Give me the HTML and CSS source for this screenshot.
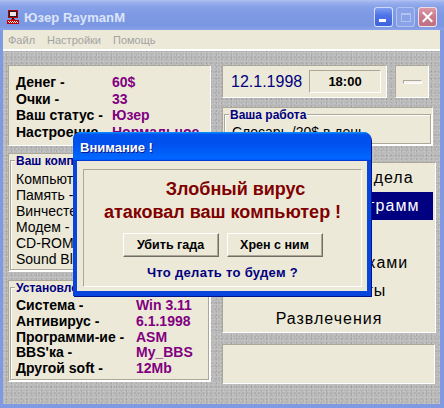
FILE: index.html
```html
<!DOCTYPE html>
<html lang="ru">
<head>
<meta charset="utf-8">
<title>Юзер RaymanM</title>
<link rel="stylesheet" href="styles.css">
</head>
<body>
<div class="window">
  <div class="titlebar">
    <svg class="app-icon" width="12" height="14" viewBox="0 0 12 14">
      <rect x="1" y="0" width="10" height="8" fill="#b80000"/>
      <rect x="2" y="1" width="8" height="6" fill="#202020"/>
      <rect x="3" y="2" width="6" height="4" fill="#e8e8e8"/>
      <rect x="5" y="8" width="2" height="1" fill="#400000"/>
      <rect x="4" y="9" width="4" height="1" fill="#b80000"/>
      <rect x="0" y="10" width="12" height="4" fill="#c00000"/>
      <rect x="1" y="11" width="1" height="1" fill="#fff"/>
      <rect x="3" y="11" width="1" height="1" fill="#fff"/>
      <rect x="5" y="11" width="1" height="1" fill="#fff"/>
      <rect x="7" y="11" width="1" height="1" fill="#fff"/>
      <rect x="9" y="11" width="1" height="1" fill="#fff"/>
      <rect x="2" y="12" width="1" height="1" fill="#fff"/>
      <rect x="4" y="12" width="1" height="1" fill="#fff"/>
      <rect x="6" y="12" width="1" height="1" fill="#fff"/>
      <rect x="8" y="12" width="1" height="1" fill="#fff"/>
      <rect x="10" y="12" width="1" height="1" fill="#fff"/>
    </svg>
    <span class="title">Юзер RaymanM</span>
    <div class="tb-buttons">
      <span class="tb-btn tb-min"><span class="min-bar"></span></span>
      <span class="tb-btn tb-max"><span class="max-box"></span></span>
      <span class="tb-btn tb-close">
        <svg width="17" height="18" viewBox="0 0 17 18"><path d="M4.5 5 L12.5 13 M12.5 5 L4.5 13" stroke="#fff" stroke-width="2" stroke-linecap="square"/></svg>
      </span>
    </div>
  </div>
  <div class="menubar">
    <span>Файл</span><span>Настройки</span><span>Помощь</span>
  </div>
  <div class="client">
    <div class="col-left">
      <div class="panel stats">
        <div class="kv"><span class="k">Денег -</span><span class="v">60$</span></div>
        <div class="kv"><span class="k">Очки -</span><span class="v">33</span></div>
        <div class="kv"><span class="k">Ваш статус -</span><span class="v">Юзер</span></div>
        <div class="kv"><span class="k">Настроение -</span><span class="v">Нормальное</span></div>
      </div>
      <div class="panel gpanel comp">
        <div class="group">
          <span class="glabel">Ваш компьютер</span>
          <div class="items">
            <div class="item">Компьютер - <span class="pv">486DX</span></div>
            <div class="item">Память - <span class="pv">8Mb</span></div>
            <div class="item">Винчестер - <span class="pv">540Mb</span></div>
            <div class="item">Модем - <span class="pv">14400</span></div>
            <div class="item">CD-ROM - <span class="pv">2x</span></div>
            <div class="item">Sound Blaster - <span class="pv">16</span></div>
          </div>
        </div>
      </div>
      <div class="panel gpanel soft">
        <div class="group">
          <span class="glabel">Установленное ПО</span>
          <div class="items soft-items">
            <div class="kv2"><span class="k2">Система -</span><span class="v2">Win 3.11</span></div>
            <div class="kv2"><span class="k2">Антивирус -</span><span class="v2">6.1.1998</span></div>
            <div class="kv2"><span class="k2">Программи-ие -</span><span class="v2">ASM</span></div>
            <div class="kv2"><span class="k2">BBS'ка -</span><span class="v2">My_BBS</span></div>
            <div class="kv2"><span class="k2">Другой soft -</span><span class="v2">12Mb</span></div>
          </div>
        </div>
      </div>
    </div>
    <div class="col-right">
      <div class="row-top">
        <div class="panel date-panel">
          <span class="date">12.1.1998</span>
          <span class="time-box">18:00</span>
        </div>
        <div class="panel small-panel"><span class="tiny-bar"></span></div>
      </div>
      <div class="panel gpanel work">
        <div class="group">
          <span class="glabel">Ваша работа</span>
          <div class="items work-items">
            <div class="item">Слесарь /20$ в день</div>
          </div>
        </div>
      </div>
      <div class="panel list">
        <div class="row">Всякие разные дела</div>
        <div class="row sel">Разработка программ</div>
        <div class="row">Своя сеть</div>
        <div class="row">Возня с железками</div>
        <div class="row">Мои контакты</div>
        <div class="row">Развлечения</div>
      </div>
      <div class="panel status"></div>
    </div>
  </div>

  <div class="dialog">
    <div class="dlg-title">Внимание !</div>
    <div class="dlg-body">
      <div class="dlg-frame">
        <div class="msg msg1">Злобный вирус</div>
        <div class="msg">атаковал ваш компьютер !</div>
        <div class="btns">
          <span class="btn">Убить гада</span>
          <span class="btn">Хрен с ним</span>
        </div>
        <div class="ask">Что делать то будем ?</div>
      </div>
    </div>
  </div>
</div>
</body>
</html>
```

FILE: styles.css
```css
* { box-sizing: border-box; }
html, body { margin: 0; padding: 0; }
body {
  width: 444px;
  height: 408px;
  overflow: hidden;
  background: #7f99e3;
  font-family: "Liberation Sans", Arial, sans-serif;
}

.window {
  position: relative;
  width: 444px;
  height: 408px;
  display: flex;
  flex-direction: column;
  background: #7f99e3;
}

/* ---------- title bar (inactive XP) ---------- */
.titlebar {
  height: 30px;
  flex: none;
  display: flex;
  align-items: center;
  padding: 4px 7px 0 7px;
  background: linear-gradient(180deg, #b2c4f2 0, #9cb2ee 2px, #87a1e8 7px, #7f9ae5 14px, #7c97e2 26px, #8aa2e6 30px);
}
.app-icon { flex: none; display: block; }
.title {
  margin-left: 5px;
  font-size: 13px;
  font-weight: bold;
  color: #dbe5f9;
  letter-spacing: 0.1px;
}
.tb-buttons {
  margin-left: auto;
  display: flex;
  gap: 3px;
}
.tb-btn {
  width: 19px;
  height: 20px;
  border-radius: 3px;
  border: 1px solid rgba(255, 255, 255, 0.75);
  display: flex;
}
.tb-min {
  background: linear-gradient(180deg, #7e9cf0 0, #4f74e6 40%, #3d63de 100%);
  align-items: flex-end;
  padding: 0 0 4px 4px;
}
.min-bar { width: 7px; height: 3px; background: #fff; }
.tb-max {
  background: #8aa3e8;
  border-color: rgba(255, 255, 255, 0.35);
  align-items: center;
  justify-content: center;
}
.max-box {
  width: 10px;
  height: 9px;
  border: 1px solid rgba(255, 255, 255, 0.35);
  border-top-width: 2px;
}
.tb-close {
  background: linear-gradient(180deg, #dc98a6 0, #c87a8c 50%, #bf6f82 100%);
  align-items: center;
  justify-content: center;
}
.tb-close svg { display: block; }

/* ---------- menu ---------- */
.menubar {
  height: 21px;
  flex: none;
  margin: 0 4px 0 3px;
  background: #ece9d8;
  border-bottom: 2px solid #fff;
  display: flex;
  align-items: center;
  gap: 12px;
  padding-left: 5px;
  font-size: 11px;
  color: #a3a3a3;
}

/* ---------- client ---------- */
.client {
  flex: 1;
  margin: 0 4px 4px 3px;
  display: flex;
  gap: 11px;
  padding: 14px 0 0 5px;
  background-color: #b9b9b9;
  background-image:
    radial-gradient(rgba(255, 255, 255, 0.22) 0.7px, transparent 1.1px),
    radial-gradient(rgba(0, 0, 0, 0.10) 0.7px, transparent 1.1px),
    radial-gradient(rgba(255, 255, 255, 0.14) 0.6px, transparent 1px),
    radial-gradient(rgba(0, 0, 0, 0.07) 0.6px, transparent 1px);
  background-size: 3px 3px, 5px 4px, 7px 5px, 4px 7px;
  background-position: 0 0, 1px 2px, 3px 1px, 2px 3px;
}

.panel {
  background: #ece9d8;
  border: 1px solid;
  border-color: #aca899 #fff #fff #aca899;
}

.col-left {
  width: 203px;
  flex: none;
  display: flex;
  flex-direction: column;
}
.col-right {
  width: 214px;
  flex: none;
  display: flex;
  flex-direction: column;
}

/* stats */
.stats {
  height: 81px;
  padding: 8px 0 0 7px;
  font-size: 14px;
  font-weight: bold;
  line-height: 16.7px;
}
.kv {
  display: grid;
  grid-template-columns: 96px auto;
  white-space: nowrap;
}
.k { color: #000; }
.v { color: #800080; }

/* group boxes */
.gpanel {
  display: flex;
  flex-direction: column;
  padding: 0 1px 1px 1px;
}
.group {
  flex: 1;
  margin-top: 6px;
  border: 1px solid #aca899;
  box-shadow: inset 1px 1px 0 #fff, 1px 1px 0 #fff;
  position: relative;
  padding: 10px 0 0 5px;
}
.glabel {
  position: absolute;
  left: 4px;
  top: -6px;
  padding: 0 1px;
  background: #ece9d8;
  font-size: 12px;
  font-weight: bold;
  line-height: 13px;
  color: #000080;
  white-space: nowrap;
}
.items {
  font-size: 14px;
  line-height: 16px;
  color: #000;
  white-space: nowrap;
}
.pv { color: #800080; }

.comp { margin-top: 7px; height: 119px; }
.soft { margin-top: 8px; height: 102px; }
.soft-items {
  font-weight: bold;
  line-height: 15.8px;
}
.kv2 {
  display: grid;
  grid-template-columns: 120px auto;
}
.k2 { color: #000; }
.v2 { color: #800080; }

/* right column */
.row-top {
  height: 33px;
  display: flex;
  gap: 8px;
}
.date-panel {
  width: 165px;
  display: flex;
  align-items: center;
  justify-content: space-between;
  padding: 0 5px 0 8px;
}
.date {
  font-size: 16px;
  color: #000080;
}
.time-box {
  width: 72px;
  height: 23px;
  border: 1px solid;
  border-color: #aca899 #fff #fff #aca899;
  display: flex;
  align-items: center;
  justify-content: center;
  font-size: 13px;
  font-weight: bold;
  color: #000;
}
.small-panel {
  width: 34px;
  display: flex;
  align-items: center;
  justify-content: center;
  padding-top: 1px;
}
.tiny-bar {
  width: 19px;
  height: 4px;
  border: 1px solid;
  border-color: #aca899 #fff #fff #aca899;
  background: #f4f3ee;
}

.work {
  margin-top: 9px;
  height: 39px;
  width: 211px;
}
.work .group { padding-top: 9px; padding-left: 7px; }

.list {
  margin-top: 16px;
  height: 171px;
  width: 214px;
  padding: 1px 2px 0 2px;
  overflow: hidden;
}
.row {
  height: 28.2px;
  line-height: 28.2px;
  text-align: center;
  font-size: 16px;
  letter-spacing: 1px;
  color: #000;
  white-space: nowrap;
}
.row.sel {
  background: #000080;
  color: #fff;
}

.status {
  margin-top: 11px;
  height: 40px;
  width: 213px;
}

/* ---------- dialog ---------- */
.dialog {
  position: absolute;
  left: 73px;
  top: 132px;
  width: 298px;
  display: flex;
  flex-direction: column;
  background: #0845dd;
  border-radius: 8px 8px 0 0;
  box-shadow: 1px 1px 0 #00138c;
}
.dlg-title {
  height: 29px;
  flex: none;
  border-radius: 7px 7px 0 0;
  background: linear-gradient(180deg, #0997ff 0, #0053ee 8%, #0050ee 40%, #0066ff 88%, #0066ff 93%, #005bff 95%, #003dd7 96%, #003dd7 100%);
  display: flex;
  align-items: center;
  padding: 2px 0 0 7px;
  font-size: 13px;
  font-weight: bold;
  color: #fff;
  text-shadow: 1px 1px 0 #0a1883;
}
.dlg-body {
  margin: 0 4px 5px 4px;
  background: #ece9d8;
  padding: 8px 5px 4px 6px;
}
.dlg-frame {
  height: 118px;
  border: 1px solid;
  border-color: #aca899 #fff #fff #aca899;
  display: flex;
  flex-direction: column;
  align-items: center;
  padding-top: 8px;
}
.msg {
  font-size: 18px;
  font-weight: bold;
  line-height: 23px;
  color: #800000;
  white-space: nowrap;
}
.msg1 { padding-left: 26px; }
.btns {
  margin-top: 9px;
  display: flex;
  gap: 8px;
}
.btn {
  width: 96px;
  height: 24px;
  background: #ece9d8;
  border: 1px solid;
  border-color: #fff #716f64 #716f64 #fff;
  box-shadow: inset -1px -1px 0 #aca899;
  display: flex;
  align-items: center;
  justify-content: center;
  font-size: 12.5px;
  font-weight: bold;
  color: #000;
}
.ask {
  margin-top: 8px;
  font-size: 13px;
  font-weight: bold;
  line-height: 15px;
  color: #000080;
  letter-spacing: 0.3px;
}
```
